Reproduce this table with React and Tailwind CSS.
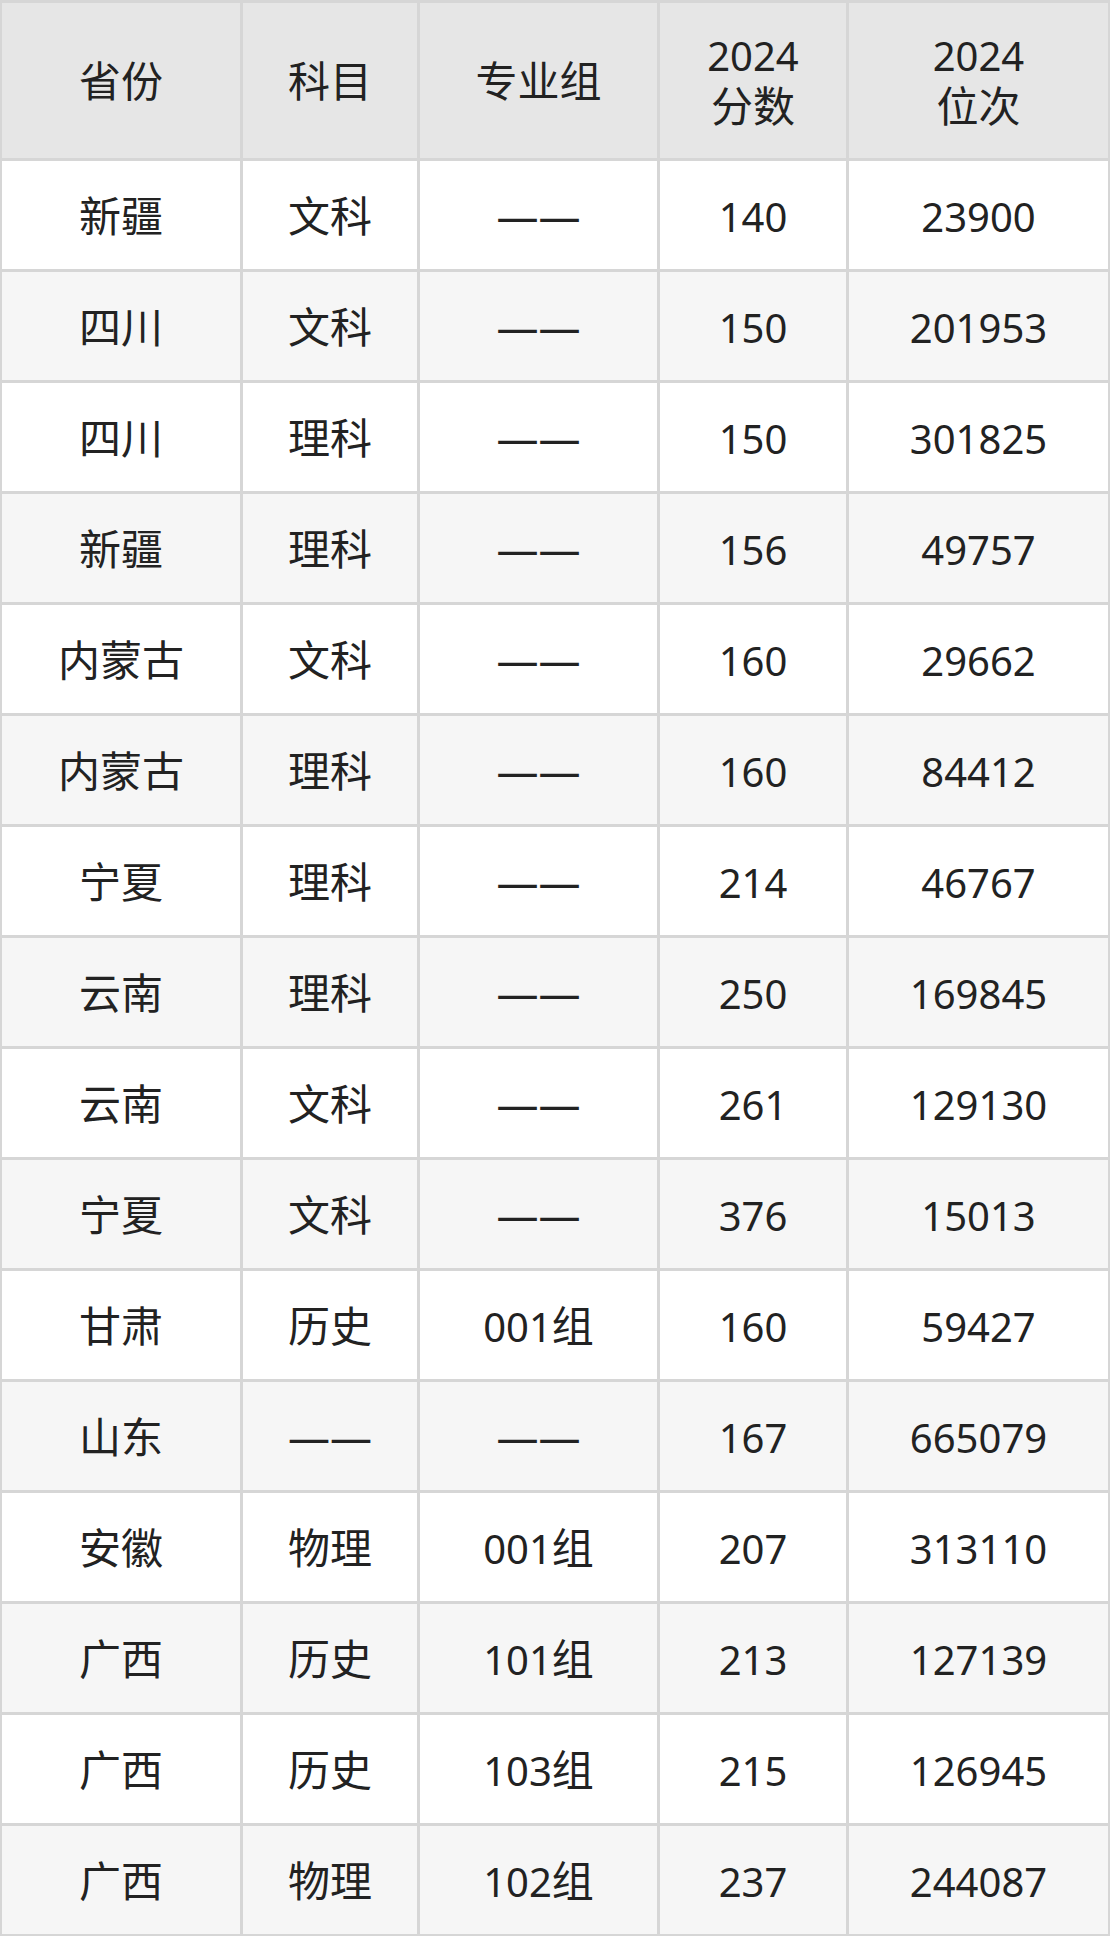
const rows = [
  ["新疆", "文科", "——", "140", "23900"],
  ["四川", "文科", "——", "150", "201953"],
  ["四川", "理科", "——", "150", "301825"],
  ["新疆", "理科", "——", "156", "49757"],
  ["内蒙古", "文科", "——", "160", "29662"],
  ["内蒙古", "理科", "——", "160", "84412"],
  ["宁夏", "理科", "——", "214", "46767"],
  ["云南", "理科", "——", "250", "169845"],
  ["云南", "文科", "——", "261", "129130"],
  ["宁夏", "文科", "——", "376", "15013"],
  ["甘肃", "历史", "001组", "160", "59427"],
  ["山东", "——", "——", "167", "665079"],
  ["安徽", "物理", "001组", "207", "313110"],
  ["广西", "历史", "101组", "213", "127139"],
  ["广西", "历史", "103组", "215", "126945"],
  ["广西", "物理", "102组", "237", "244087"],
];

const headers = [["省份"], ["科目"], ["专业组"], ["2024", "分数"], ["2024", "位次"]];

// digits look a touch narrower than the CJK glyphs in the original
function Text({ value }) {
  const m = value.match(/^(\d+)(.*)$/);
  if (!m) return <span>{value}</span>;
  return (
    <span>
      <span className="text-[40px]">{m[1]}</span>
      {m[2]}
    </span>
  );
}

function App() {
  return (
    <div
      className="w-[1110px] bg-[#d6d6d6] p-[2px] pt-[3px] text-[#222222] text-[42px]"
      style={{ fontFamily: '"Noto Sans", "Noto Sans CJK SC", sans-serif' }}
    >
      <div className="grid grid-cols-[238px_174px_237px_186px_1fr] gap-[3px]">
        {headers.map((h) => (
          <div
            key={h.join("")}
            className="h-[155px] bg-[#e6e6e6] flex flex-col items-center justify-center text-center leading-[50px]"
          >
            {h.map((line) => (
              <Text key={line} value={line} />
            ))}
          </div>
        ))}
        {rows.map((r, i) =>
          r.map((c, j) => (
            <div
              key={i + "-" + j}
              className={
                "h-[108px] flex items-center justify-center " +
                (i % 2 === 0 ? "bg-white" : "bg-[#f6f6f6]")
              }
            >
              <Text value={c} />
            </div>
          ))
        )}
      </div>
    </div>
  );
}

export default App;
